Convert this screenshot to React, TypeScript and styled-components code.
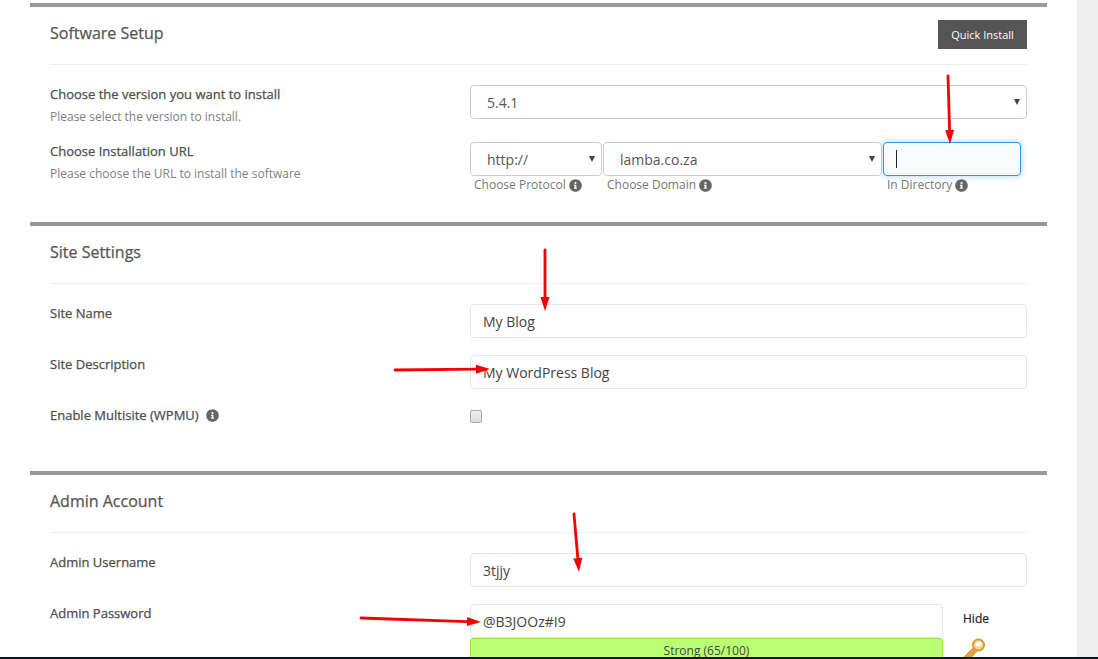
import React from "react";
import styled, { createGlobalStyle } from "styled-components";
import { FaInfoCircle } from "react-icons/fa";

const Global = createGlobalStyle`
  html, body { margin: 0; padding: 0; background: #fff; }
  body { font-family: "Open Sans", "Liberation Sans", sans-serif; overflow: hidden; }
`;
const Page = styled.div`
  position: relative; width: 1098px; height: 659px; overflow: hidden;
  display: flex; flex-direction: column;
`;
const Columns = styled.div`
  flex: 1; min-height: 0; display: flex; overflow: hidden;
`;
const Main = styled.main`
  width: 1017px; margin-left: 30px; padding-top: 3px; flex: none;
`;
const Sidebar = styled.aside`
  width: 21px; margin-left: 30px; background: #eeeeee; flex: none;
`;
const BottomEdge = styled.div`
  height: 2px; background: #0b1420; flex: none;
`;
const Section = styled.section<{ $pb: number }>`
  border-top: 4px solid #999999;
  padding: 0 20px ${(p) => p.$pb}px;
`;
const Header = styled.header`
  height: 57px; border-bottom: 1px solid #eeeeee; display: flex;
  justify-content: space-between; align-items: center; box-sizing: content-box;
`;
const Title = styled.h2`
  margin: -5px 0 0; font-size: 16px; line-height: 22px; font-weight: 500; color: #555555;
  -webkit-text-stroke: 0.25px #555555;
`;
const QuickInstall = styled.button`
  width: 89px; height: 29px; margin-top: -2px; border: 0; padding: 0; background: #555555; color: #fff;
  font: 400 11px "Open Sans", sans-serif;
`;
const Body = styled.div`
  padding-top: 20px; display: flex; flex-direction: column; gap: 17px;
`;
const Row = styled.div`
  display: grid; grid-template-columns: 420px 557px; align-items: start;
`;
const LabelCol = styled.div`
  display: flex; flex-direction: column; gap: 4px;
`;
const Label = styled.label`
  font-size: 13px; line-height: 18px; font-weight: 500; color: #4d4d4d;
  -webkit-text-stroke: 0.25px #4d4d4d;
  display: flex; align-items: center; gap: 7px;
`;
const Hint = styled.div`
  font-size: 12px; line-height: 18px; color: #808080; padding-top: 1px; margin-bottom: -1px;
`;
const SelectWrap = styled.div`
  position: relative; height: 34px;
  &::after {
    content: ""; position: absolute; right: 7px; top: 14px;
    border-left: 3.5px solid transparent; border-right: 3.5px solid transparent;
    border-top: 6px solid #444444; pointer-events: none;
  }
`;
const Select = styled.select`
  appearance: none; display: block; width: 100%; height: 34px; box-sizing: border-box;
  border: 1px solid #cccccc; border-radius: 4px; background: #fff; color: #555555;
  padding: 0 16px; font: 400 14px "Open Sans", sans-serif;
`;
const TextInput = styled.input`
  display: block; width: 100%; height: 34px; box-sizing: border-box; border: 1px solid #e6e6e6;
  border-radius: 4px; background: #fff; color: #444444; padding: 0 12px;
  font: 400 14px "Open Sans", sans-serif; outline: none;
`;
const UrlRow = styled.div`
  display: grid; grid-template-columns: 132px 279px 138px; column-gap: 1px; height: 55px;
`;
const UrlCell = styled.div`
  display: flex; flex-direction: column;
`;
const Caption = styled.div`
  font-size: 12px; line-height: 18px; color: #777777; padding-left: 4px; display: flex; align-items: center; gap: 3px;
`;
const FocusBox = styled.div`
  height: 34px; box-sizing: border-box; border: 1px solid #2f96e8; border-radius: 4px;
  background: #f8fbff; box-shadow: 0 0 6px rgba(47, 150, 232, 0.45); padding: 7px 12px;
`;
const Caret = styled.div`
  width: 1px; height: 18px; background: #222222;
`;
const Info = styled(FaInfoCircle)`
  width: 13px; height: 13px; color: #666666; flex: none;
`;
const CheckBox = styled.input`
  appearance: none; display: block; width: 12px; height: 13px; margin: 4px 0 0; box-sizing: border-box;
  border: 1px solid #aaaaaa; border-radius: 2px; background: linear-gradient(#eeeeee, #dddddd);
`;
const PasswordGrid = styled.div`
  display: grid; grid-template-columns: 473px 84px;
`;
const PasswordCol = styled.div`
  display: flex; flex-direction: column;
`;
const Strength = styled.div`
  height: 30px; box-sizing: border-box; border: 1px solid #8fe83a; border-radius: 3px 3px 0 0;
  background: #bbff77; color: #444444; font-size: 12px; line-height: 24px; text-align: center;
`;
const HideCol = styled.div`
  padding: 7px 0 0 20px; display: flex; flex-direction: column; align-items: flex-start; gap: 11px;
`;
const HideLink = styled.span`
  font-size: 12px; line-height: 16px; font-weight: 500; color: #222222;
  -webkit-text-stroke: 0.2px #222222;
`;
const KeySvg = styled.svg`
  display: block; flex: none;
`;
const Arrows = styled.svg`
  position: absolute; left: 0; top: 0; width: 1098px; height: 659px; pointer-events: none;
`;

function Arrow({ x1, y1, x2, y2 }: { x1: number; y1: number; x2: number; y2: number }) {
  const dx = x2 - x1, dy = y2 - y1;
  const len = Math.hypot(dx, dy);
  const ux = dx / len, uy = dy / len;
  const bx = x2 - ux * 14, by = y2 - uy * 14;
  const px = -uy * 4.5, py = ux * 4.5;
  return (
    <g>
      <line x1={x1} y1={y1} x2={bx} y2={by} stroke="#f50000" strokeWidth={2.8} strokeLinecap="round" />
      <polygon points={`${x2},${y2} ${bx + px},${by + py} ${bx - px},${by - py}`} fill="#f50000" />
    </g>
  );
}

function KeyIcon() {
  return (
    <KeySvg width="24" height="24" viewBox="0 0 24 24">
      <path d="M11 9 L1 19 L3 22 L7 21 L15 12 Z" fill="#e8a33a" stroke="#c4821f" strokeWidth="0.7" />
      <circle cx="15.5" cy="7" r="5.6" fill="#f5d48c" stroke="#dd952b" strokeWidth="1.8" />
      <ellipse cx="15.5" cy="6" rx="3.4" ry="2.2" fill="#ffffff" transform="rotate(-20 15.5 6)" />
    </KeySvg>
  );
}

export default function App() {
  return (
    <Page>
      <Global />
      <Columns>
        <Main>
          <Section $pb={25}>
            <Header>
              <Title>Software Setup</Title>
              <QuickInstall>Quick Install</QuickInstall>
            </Header>
            <Body>
              <Row>
                <LabelCol>
                  <Label>Choose the version you want to install</Label>
                  <Hint>Please select the version to install.</Hint>
                </LabelCol>
                <SelectWrap><Select defaultValue="5.4.1"><option>5.4.1</option></Select></SelectWrap>
              </Row>
              <Row>
                <LabelCol>
                  <Label>Choose Installation URL</Label>
                  <Hint>Please choose the URL to install the software</Hint>
                </LabelCol>
                <UrlRow>
                  <UrlCell>
                    <SelectWrap><Select><option>http://</option></Select></SelectWrap>
                    <Caption>Choose Protocol <Info /></Caption>
                  </UrlCell>
                  <UrlCell>
                    <SelectWrap><Select><option>lamba.co.za</option></Select></SelectWrap>
                    <Caption>Choose Domain <Info /></Caption>
                  </UrlCell>
                  <UrlCell>
                    <FocusBox><Caret /></FocusBox>
                    <Caption>In Directory <Info /></Caption>
                  </UrlCell>
                </UrlRow>
              </Row>
            </Body>
          </Section>
          <Section $pb={47}>
            <Header><Title>Site Settings</Title></Header>
            <Body>
              <Row>
                <Label>Site Name</Label>
                <TextInput readOnly value="My Blog" />
              </Row>
              <Row>
                <Label>Site Description</Label>
                <TextInput readOnly value="My WordPress Blog" />
              </Row>
              <Row>
                <Label>Enable Multisite (WPMU) <Info /></Label>
                <CheckBox type="checkbox" />
              </Row>
            </Body>
          </Section>
          <Section $pb={0}>
            <Header><Title>Admin Account</Title></Header>
            <Body>
              <Row>
                <Label>Admin Username</Label>
                <TextInput readOnly value="3tjjy" />
              </Row>
              <Row>
                <Label>Admin Password</Label>
                <PasswordGrid>
                  <PasswordCol>
                    <TextInput readOnly value="@B3JOOz#I9" />
                    <Strength>Strong (65/100)</Strength>
                  </PasswordCol>
                  <HideCol>
                    <HideLink>Hide</HideLink>
                    <KeyIcon />
                  </HideCol>
                </PasswordGrid>
              </Row>
            </Body>
          </Section>
        </Main>
        <Sidebar />
      </Columns>
      <BottomEdge />
      <Arrows viewBox="0 0 1098 659">
        <Arrow x1={948} y1={76} x2={950} y2={144} />
        <Arrow x1={545} y1={250} x2={545} y2={311} />
        <Arrow x1={395} y1={370} x2={490} y2={369} />
        <Arrow x1={574} y1={514} x2={579} y2={572} />
        <Arrow x1={361} y1={618} x2={481} y2={622} />
      </Arrows>
    </Page>
  );
}
